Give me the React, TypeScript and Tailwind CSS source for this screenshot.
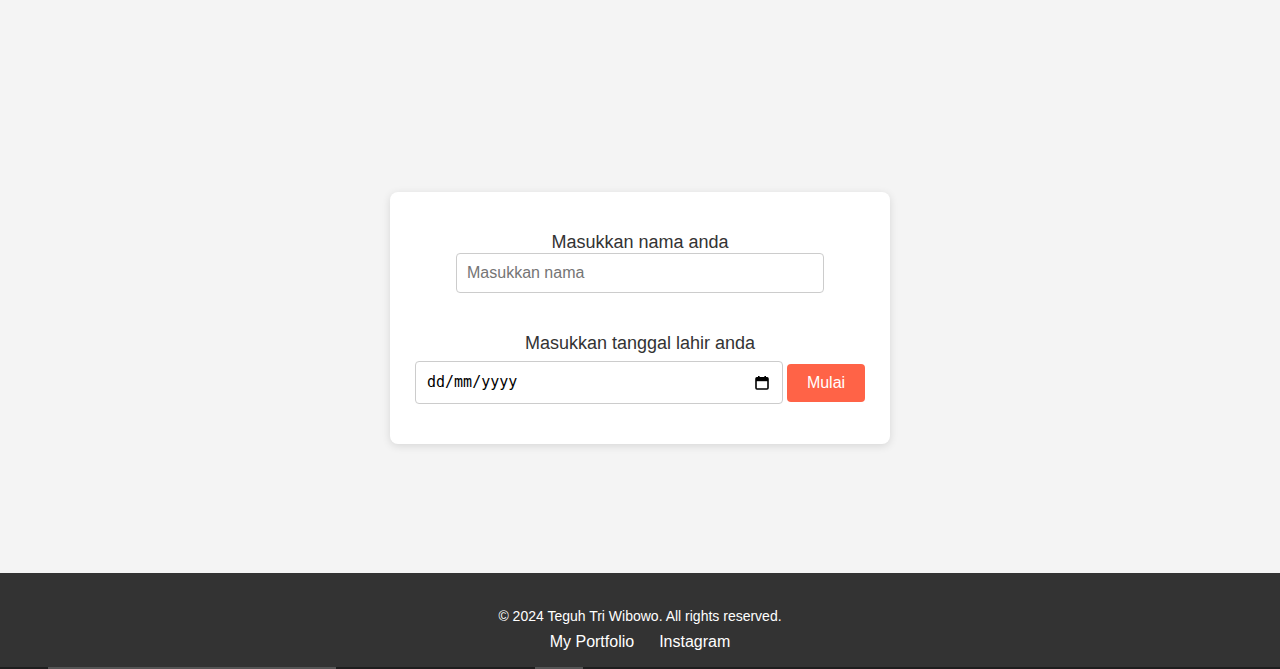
import React from "react";

function CalendarIcon() {
  return (
    <svg width="14" height="14" viewBox="0 0 14 14" aria-hidden="true">
      <rect x="3" y="0" width="1.6" height="3" fill="#000" />
      <rect x="9.4" y="0" width="1.6" height="3" fill="#000" />
      <rect x="1" y="1.8" width="12" height="11.2" rx="1" fill="none" stroke="#000" strokeWidth="1.6" />
      <rect x="1" y="1.8" width="12" height="3.4" fill="#000" />
    </svg>
  );
}

export default function App() {
  return (
    <div className="min-h-[669px] flex flex-col bg-[#f4f4f4] [font-family:'Liberation_Sans',Arial,sans-serif]">
      <main className="h-[573px] flex justify-center pt-[192px]">
        <div className="w-[500px] h-[252px] bg-white rounded-lg shadow-[0_2px_8px_rgba(0,0,0,0.12)] flex flex-col items-center pt-[40px]">
          <label className="text-[18px] leading-[21px] text-[#333]">Masukkan nama anda</label>
          <input
            type="text"
            placeholder="Masukkan nama"
            className="w-[368px] h-[40px] border border-[#ccc] rounded-[4px] px-[10px] text-[16px] text-[#333] placeholder:text-[#757575] outline-none"
          />
          <label className="mt-[40px] text-[18px] leading-[21px] text-[#333]">Masukkan tanggal lahir anda</label>
          <div className="mt-[7px] flex items-center gap-[4px]">
            <div className="w-[368px] h-[43px] border border-[#ccc] rounded-[4px] pl-[11px] pr-[13px] flex items-center justify-between bg-white">
              <span className="text-[15px] text-black [font-family:'DejaVu_Sans_Mono',monospace]">dd/mm/yyyy</span>
              <CalendarIcon />
            </div>
            <button className="w-[78px] h-[38px] bg-[#ff6347] text-white text-[16px] rounded-[4px]">Mulai</button>
          </div>
        </div>
      </main>
      <footer className="bg-[#333] h-[96px] flex flex-col items-center text-white pt-[35px] relative">
        <p className="text-[14px] leading-[16px]">© 2024 Teguh Tri Wibowo. All rights reserved.</p>
        <div className="mt-[9px] flex gap-[25px] text-[16px] leading-[18px]">
          <a href="#">My Portfolio</a>
          <a href="#">Instagram</a>
        </div>
        <div className="absolute bottom-0 left-0 right-0 h-[2px] bg-[#1e1e1e]">
          <div className="absolute left-[48px] w-[288px] h-[2px] bg-[#555]" />
          <div className="absolute left-[535px] w-[48px] h-[2px] bg-[#555]" />
        </div>
      </footer>
    </div>
  );
}
